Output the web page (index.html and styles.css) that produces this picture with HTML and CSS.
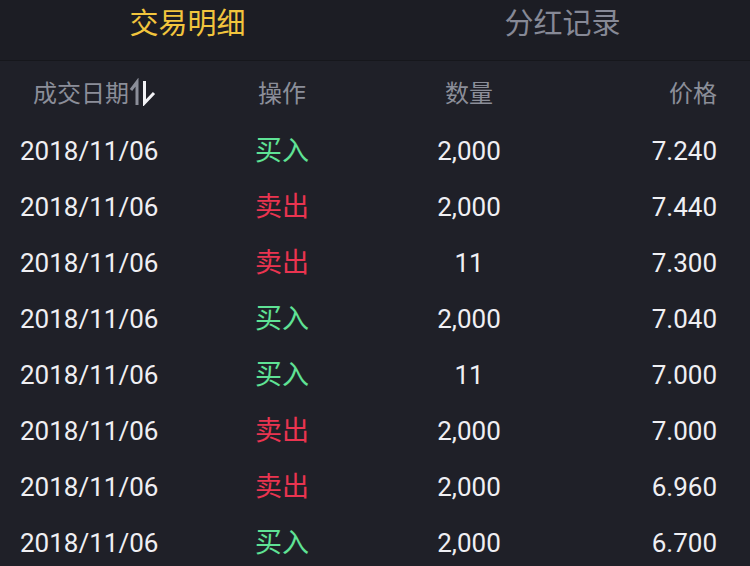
FILE: index.html
```html
<!DOCTYPE html>
<html lang="zh">
<head>
<meta charset="utf-8">
<link rel="stylesheet" href="styles.css">
</head>
<body>
<div class="page">
  <div class="tabs">
    <div class="tab active">交易明细</div>
    <div class="tab">分红记录</div>
  </div>
  <div class="table">
    <div class="row head">
      <div class="c1 hd">成交日期<svg class="sort" width="28" height="28" viewBox="0 0 28 28"><path d="M8 27 V4 L2 12" fill="none" stroke="#8b8e99" stroke-width="3"/><path d="M15.5 3 V25 L25 15" fill="none" stroke="#f2f2f5" stroke-width="3"/></svg></div>
      <div class="c2">操作</div>
      <div class="c3">数量</div>
      <div class="c4">价格</div>
    </div>
    <div class="row"><div class="c1">2018/11/06</div><div class="c2 buy">买入</div><div class="c3">2,000</div><div class="c4">7.240</div></div>
    <div class="row"><div class="c1">2018/11/06</div><div class="c2 sell">卖出</div><div class="c3">2,000</div><div class="c4">7.440</div></div>
    <div class="row"><div class="c1">2018/11/06</div><div class="c2 sell">卖出</div><div class="c3">11</div><div class="c4">7.300</div></div>
    <div class="row"><div class="c1">2018/11/06</div><div class="c2 buy">买入</div><div class="c3">2,000</div><div class="c4">7.040</div></div>
    <div class="row"><div class="c1">2018/11/06</div><div class="c2 buy">买入</div><div class="c3">11</div><div class="c4">7.000</div></div>
    <div class="row"><div class="c1">2018/11/06</div><div class="c2 sell">卖出</div><div class="c3">2,000</div><div class="c4">7.000</div></div>
    <div class="row"><div class="c1">2018/11/06</div><div class="c2 sell">卖出</div><div class="c3">2,000</div><div class="c4">6.960</div></div>
    <div class="row"><div class="c1">2018/11/06</div><div class="c2 buy">买入</div><div class="c3">2,000</div><div class="c4">6.700</div></div>
  </div>
</div>
</body>
</html>
```
FILE: styles.css
```css
html, body {
  margin: 0;
  padding: 0;
  background: #1f2028;
  overflow: hidden;
}
.page {
  width: 750px;
  height: 566px;
  background: #1f2028;
  font-family: Roboto, "Noto Sans CJK SC", sans-serif;
}
.tabs {
  display: flex;
  height: 60px;
  background: #1c1d24;
  border-bottom: 1px solid #16171c;
}
.tab {
  flex: 1;
  text-align: center;
  font-family: "Noto Sans CJK SC", sans-serif;
  font-size: 29px;
  line-height: 42px;
  color: #868996;
}
.tab.active {
  color: #f2c53d;
}
.table {
  display: flex;
  flex-direction: column;
}
.row {
  display: grid;
  grid-template-columns: 200px 124px 250px 123px;
  padding: 0 33px 0 20px;
  height: 56px;
  align-items: center;
  color: #efeff3;
  font-size: 26px;
}
.row.head {
  height: 62px;
  color: #8b8e99;
  font-family: "Noto Sans CJK SC", sans-serif;
  font-size: 24px;
  padding-bottom: 2px;
  box-sizing: border-box;
}
.hd {
  padding-left: 13px;
  display: flex;
  align-items: center;
}
.sort {
  flex-shrink: 0;
  margin-left: 0;
  margin-top: 1px;
}
.c2, .c3 { text-align: center; }
.c4 { text-align: right; }
.c2.buy, .c2.sell {
  font-family: "Noto Sans CJK SC", sans-serif;
  font-size: 27px;
  line-height: 32px;
  padding-bottom: 4px;
}
.buy { color: #5fe295; }
.sell { color: #ea3450; }
```
